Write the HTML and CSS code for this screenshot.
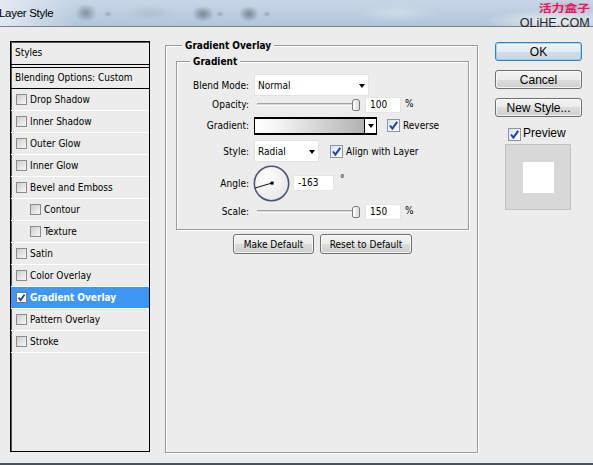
FILE: index.html
```html
<!DOCTYPE html>
<html lang="en">
<head>
<meta charset="utf-8">
<title>Layer Style</title>
<link rel="stylesheet" href="styles.css">
</head>
<body>
<div class="window">
  <div class="titlebar">
    <span class="title">Layer Style</span>
    <div class="watermark">
      <span class="wm-cn">活力盒子</span>
      <span class="wm-en">OLiHE.COM</span>
    </div>
  </div>
  <div class="main">
    <div class="styles-panel">
      <div class="panel-head">Styles</div>
      <div class="panel-blend">Blending Options: Custom</div>
      <ul class="fx-list">
        <li class="fx"><span class="cb"></span>Drop Shadow</li>
        <li class="fx"><span class="cb"></span>Inner Shadow</li>
        <li class="fx"><span class="cb"></span>Outer Glow</li>
        <li class="fx"><span class="cb"></span>Inner Glow</li>
        <li class="fx"><span class="cb"></span>Bevel and Emboss</li>
        <li class="fx sub"><span class="cb"></span>Contour</li>
        <li class="fx sub"><span class="cb"></span>Texture</li>
        <li class="fx"><span class="cb"></span>Satin</li>
        <li class="fx"><span class="cb"></span>Color Overlay</li>
        <li class="fx active"><span class="cb on"><svg width="9" height="9" viewBox="0 0 9 9"><path d="M1.5 4.5 L3.6 7.2 L7.6 1.6" fill="none" stroke="#23409a" stroke-width="1.8"/></svg></span>Gradient Overlay</li>
        <li class="fx"><span class="cb"></span>Pattern Overlay</li>
        <li class="fx"><span class="cb"></span>Stroke</li>
      </ul>
    </div>

    <div class="settings">
      <div class="legend">Gradient Overlay</div>
      <div class="group">
        <div class="legend">Gradient</div>
        <div class="form">
          <div class="lbl">Blend Mode:</div>
          <div class="ctl"><div class="select wide"><span>Normal</span><span class="caret"></span></div></div>

          <div class="lbl">Opacity:</div>
          <div class="ctl">
            <div class="slider"><span class="track"></span><span class="thumb"></span></div>
            <div class="num">100</div><span class="unit">%</span>
          </div>

          <div class="lbl">Gradient:</div>
          <div class="ctl">
            <div class="grad"><span class="grad-bar"></span><span class="grad-arrow"><span class="caret"></span></span></div>
            <span class="chk gap-rev"><svg width="11" height="11" viewBox="0 0 11 11"><path d="M2 5.5 L4.4 8.6 L9.2 1.8" fill="none" stroke="#23409a" stroke-width="2"/></svg></span><span class="chk-text">Reverse</span>
          </div>

          <div class="lbl">Style:</div>
          <div class="ctl">
            <div class="select narrow"><span>Radial</span><span class="caret"></span></div>
            <span class="chk gap-align"><svg width="11" height="11" viewBox="0 0 11 11"><path d="M2 5.5 L4.4 8.6 L9.2 1.8" fill="none" stroke="#23409a" stroke-width="2"/></svg></span><span class="chk-text">Align with Layer</span>
          </div>

          <div class="lbl">Angle:</div>
          <div class="ctl">
            <svg class="dial" width="37" height="37" viewBox="0 0 37 37">
              <defs>
                <radialGradient id="dialfill" cx="0.4" cy="0.35" r="0.7">
                  <stop offset="0" stop-color="#ffffff"/>
                  <stop offset="1" stop-color="#e6e6e6"/>
                </radialGradient>
              </defs>
              <circle cx="18.5" cy="18.5" r="17.2" fill="url(#dialfill)" stroke="#4b5674" stroke-width="1.6"/>
              <line x1="19" y1="18" x2="2.2" y2="23" stroke="#111" stroke-width="1"/>
              <rect x="17.6" y="16.6" width="3" height="3" fill="#000"/>
            </svg>
            <div class="num angle">-163</div><span class="deg">°</span>
          </div>

          <div class="lbl">Scale:</div>
          <div class="ctl">
            <div class="slider"><span class="track"></span><span class="thumb"></span></div>
            <div class="num">150</div><span class="unit">%</span>
          </div>
        </div>
      </div>
      <div class="defaults">
        <button class="btn make">Make Default</button>
        <button class="btn reset">Reset to Default</button>
      </div>
    </div>

    <div class="actions">
      <button class="abtn default">OK</button>
      <button class="abtn">Cancel</button>
      <button class="abtn">New Style...</button>
      <div class="preview-row">
        <span class="chk"><svg width="11" height="11" viewBox="0 0 11 11"><path d="M2 5.5 L4.4 8.6 L9.2 1.8" fill="none" stroke="#23409a" stroke-width="2"/></svg></span><span class="preview-text">Preview</span>
      </div>
      <div class="preview"><span class="swatch"></span></div>
    </div>
  </div>
</div>
</body>
</html>
```
FILE: styles.css
```css
* {
  box-sizing: border-box;
  margin: 0;
  padding: 0;
}

html, body {
  width: 593px;
  height: 465px;
  overflow: hidden;
}

body {
  background: #ececec;
  font-family: "DejaVu Sans Condensed", "DejaVu Sans", sans-serif;
  font-stretch: condensed;
  font-size: 10px;
  color: #000;
}

.window {
  width: 593px;
  height: 465px;
  display: flex;
  flex-direction: column;
}

/* ---------- title bar ---------- */
.titlebar {
  height: 27px;
  flex: none;
  display: flex;
  align-items: flex-start;
  border-bottom: 1px solid #76838f;
  background:
    radial-gradient(11px 9px at 86px 13px, rgba(112,124,139,0.75), rgba(112,124,139,0)),
    radial-gradient(4px 3px at 108px 14px, rgba(112,124,139,0.5), rgba(112,124,139,0)),
    radial-gradient(22px 7px at 150px 13px, rgba(150,165,180,0.35), rgba(150,165,180,0)),
    radial-gradient(11px 8px at 203px 14px, rgba(104,116,131,0.8), rgba(104,116,131,0)),
    radial-gradient(4px 3px at 220px 14px, rgba(112,124,139,0.5), rgba(112,124,139,0)),
    radial-gradient(10px 8px at 249px 14px, rgba(104,116,131,0.8), rgba(104,116,131,0)),
    radial-gradient(4px 3px at 267px 14px, rgba(112,124,139,0.5), rgba(112,124,139,0)),
    radial-gradient(42px 10px at 397px 13px, rgba(214,224,234,0.7), rgba(214,224,234,0)),
    radial-gradient(70px 12px at 555px 21px, rgba(238,238,238,0.95), rgba(238,238,238,0)),
    radial-gradient(30px 8px at 566px 8px, rgba(214,120,140,0.45), rgba(214,120,140,0)),
    linear-gradient(90deg, #e2e9f0 0, rgba(226,233,240,0) 75px),
    linear-gradient(180deg, #c6d6e6 0, #b1c6db 100%);
}

.title {
  font-family: "Liberation Sans", Arial, sans-serif;
  font-stretch: normal;
  font-size: 11.5px;
  line-height: 26px;
  letter-spacing: -0.3px;
  margin-left: -1px;
}

.watermark {
  margin-left: auto;
  margin-right: 3px;
  padding-top: 2px;
  display: flex;
  flex-direction: column;
  align-items: flex-end;
}

.wm-cn {
  font-family: "Noto Sans CJK SC", sans-serif;
  font-weight: bold;
  font-size: 10.5px;
  line-height: 12px;
  height: 12px;
  color: #e2185e;
  transform: scaleX(1.22);
  transform-origin: right center;
}

.wm-en {
  margin-top: 3px;
  font-family: "Liberation Sans", Arial, sans-serif;
  font-stretch: normal;
  font-size: 12px;
  line-height: 12px;
  height: 12px;
  color: #262626;
  letter-spacing: 0;
  transform: scaleX(1.05);
  transform-origin: right center;
}

/* ---------- main area ---------- */
.main {
  height: 438px;
  flex: none;
  display: flex;
  align-items: flex-start;
  padding: 14px 0 0 10px;
  border-bottom: 2px solid #46535f;
  background: #ececec;
}

/* ---------- styles list ---------- */
.styles-panel {
  flex: none;
  width: 140px;
  height: 411px;
  border: 1px solid #000;
  box-shadow: inset 1px 1px 0 #555;
}

.panel-head {
  height: 23px;
  line-height: 22px;
  padding-left: 4px;
  border-bottom: 1px solid #000;
}

.panel-blend {
  margin-top: 2px;
  height: 22px;
  line-height: 20px;
  padding-left: 4px;
  border-top: 1px solid #000;
  border-bottom: 1px solid #000;
}

.fx-list {
  list-style: none;
}

.fx {
  height: 22px;
  display: flex;
  align-items: center;
  gap: 3px;
  padding-left: 5px;
  border-bottom: 1px solid #fff;
}

.fx.sub {
  padding-left: 19px;
}

.fx.active {
  background: #3d97f4;
  color: #fff;
  font-weight: bold;
}

.cb {
  flex: none;
  width: 11px;
  height: 11px;
  border: 1px solid #8c8c8c;
  background: linear-gradient(135deg, #cdcdcd, #f7f7f7);
  display: flex;
  align-items: center;
  justify-content: center;
}

.cb.on {
  background: #fff;
  border-color: #7a7a7a;
}

/* ---------- settings ---------- */
.settings {
  flex: none;
  width: 313px;
  height: 408px;
  margin: 4px 0 0 15px;
  padding: 0 8px 0 10px;
  border: 1px solid #9a9a9a;
  box-shadow: 1px 1px 0 #fff, inset 1px 1px 0 #fff;
}

.legend {
  width: max-content;
  background: #ececec;
  padding: 0 3px;
  font-weight: bold;
  line-height: 13px;
  margin-top: -7px;
}

.settings > .legend {
  margin-left: 6px;
}

.group {
  margin-top: 9px;
  height: 169px;
  border: 1px solid #9a9a9a;
  box-shadow: 1px 1px 0 #fff, inset 1px 1px 0 #fff;
}

.group > .legend {
  margin-left: 13px;
}

.form {
  margin-top: 6px;
  display: grid;
  grid-template-columns: 72px auto;
  grid-template-rows: 22px 17px 25px 26px 38px 19px;
  column-gap: 5px;
  align-items: center;
}

.lbl {
  text-align: right;
}

.ctl {
  display: flex;
  align-items: center;
}

.select {
  height: 22px;
  background: #fff;
  border: 1px solid #e2e2e2;
  display: flex;
  align-items: center;
  justify-content: space-between;
  padding: 1px 3px 0 3px;
}

.select.wide {
  width: 115px;
}

.select.narrow {
  width: 65px;
}

.caret {
  width: 0;
  height: 0;
  border-left: 3.5px solid transparent;
  border-right: 3.5px solid transparent;
  border-top: 4px solid #000;
}

.slider {
  width: 106px;
  height: 16px;
  display: flex;
  align-items: center;
  padding-left: 3px;
}

.track {
  flex: 1;
  height: 3px;
  background: #d6d6d6;
  border-top: 1px solid #a3a3a3;
  border-bottom: 1px solid #fafafa;
}

.thumb {
  flex: none;
  width: 8px;
  height: 12px;
  border: 1px solid #7a7a7a;
  border-radius: 3px 3px 2px 2px;
  background: linear-gradient(90deg, #ffffff, #d9d9d9);
}

.num {
  width: 36px;
  height: 16px;
  margin-left: 5px;
  padding-left: 4px;
  line-height: 14px;
  background: #fff;
  border: 1px solid #e4e4e4;
}

.num.angle {
  width: 41px;
  margin-left: 3px;
}

.unit {
  margin-left: 4px;
  margin-top: -3px;
}

.deg {
  margin-left: 6px;
  margin-top: -9px;
}

.dial {
  margin-left: -1px;
}

.grad {
  display: flex;
  height: 18px;
}

.grad-bar {
  width: 111px;
  border-style: solid;
  border-color: #000;
  border-width: 2px 1px 2px 1px;
  background: linear-gradient(90deg, #ffffff 0, #f6f6f6 18%, #b2b2b2 100%);
}

.grad-arrow {
  width: 12px;
  border-style: solid;
  border-color: #000;
  border-width: 2px 1px 2px 0;
  background: #fff;
  display: flex;
  align-items: center;
  justify-content: center;
}

.chk {
  flex: none;
  width: 13px;
  height: 13px;
  border: 1px solid #8995ad;
  background: linear-gradient(135deg, #dde2ea, #fbfcfd);
  display: flex;
  align-items: center;
  justify-content: center;
}

.chk.gap-rev {
  margin-left: 10px;
}

.chk.gap-align {
  margin-left: 11px;
}

.chk-text {
  margin-left: 3px;
}

.defaults {
  margin-top: 4px;
  display: flex;
  justify-content: center;
  gap: 6px;
}

.btn {
  height: 20px;
  font: inherit;
  color: #000;
  border: 1px solid #707070;
  border-radius: 3px;
  background: linear-gradient(180deg, #f3f3f3 0, #ebebeb 50%, #dddddd 50%, #cfcfcf 100%);
  box-shadow: inset 0 0 0 1px rgba(255,255,255,0.7);
}

.btn.make {
  width: 81px;
}

.btn.reset {
  width: 92px;
}

/* ---------- actions ---------- */
.actions {
  flex: none;
  width: 87px;
  margin: 1px 0 0 17px;
  display: flex;
  flex-direction: column;
  font-family: "Liberation Sans", Arial, sans-serif;
  font-stretch: normal;
  font-size: 12px;
}

.abtn {
  height: 19px;
  margin-top: 9px;
  font: inherit;
  color: #000;
  border: 1px solid #707070;
  border-radius: 3px;
  background: linear-gradient(180deg, #f3f3f3 0, #ebebeb 50%, #dddddd 50%, #cfcfcf 100%);
  box-shadow: inset 0 0 0 1px rgba(255,255,255,0.7);
}

.abtn.default {
  margin-top: 0;
  border-color: #3c7fb1;
  background: linear-gradient(180deg, #eef4f9 0, #e2ebf3 50%, #d2dfea 50%, #c6d6e4 100%);
  box-shadow: inset 0 0 0 1px rgba(120,200,240,0.6);
}

.preview-row {
  margin-top: 10px;
  padding-left: 13px;
  height: 14px;
  display: flex;
  align-items: center;
}

.preview-text {
  margin-left: 2px;
  line-height: 14px;
  margin-top: -2px;
}

.preview {
  margin: 3px 0 0 10px;
  width: 66px;
  height: 66px;
  background: #d8d8d8;
  border: 1px solid #c2c2c2;
  display: flex;
  align-items: center;
  justify-content: center;
}

.swatch {
  width: 31px;
  height: 31px;
  background: #fff;
  margin-top: 1px;
}
```
